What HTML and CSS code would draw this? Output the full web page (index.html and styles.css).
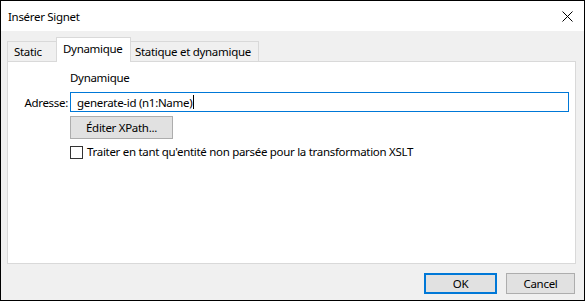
FILE: index.html
```html
<!DOCTYPE html>
<html lang="fr">
<head>
  <meta charset="UTF-8">
  <title>Insérer Signet</title>
  <link rel="stylesheet" href="styles.css">
</head>
<body>
  <div class="dialogue">
    <!-- Barre de titre -->
    <div class="titre">
      <span>Insérer Signet</span>
      <svg class="fermer" width="11" height="11" viewBox="0 0 11 11">
        <path d="M0.5 0.5 L10.5 10.5 M10.5 0.5 L0.5 10.5" stroke="#000" stroke-width="1" fill="none"/>
      </svg>
    </div>

    <div class="corps">
      <!-- Onglets -->
      <div class="onglets">
        <div class="onglet o-static">Static</div>
        <div class="onglet actif">Dynamique</div>
        <div class="onglet o-mixte">Statique et dynamique</div>
      </div>

      <div class="panneau">
        <div class="rangee">
          <span class="etiquette"></span>
          <span class="groupe">Dynamique</span>
        </div>
        <div class="rangee champ-rangee">
          <span class="etiquette">Adresse:</span>
          <div class="champ">generate-id (n1:Name)<span class="curseur"></span></div>
        </div>
        <div class="rangee">
          <span class="etiquette"></span>
          <button class="bouton xpath">Éditer XPath...</button>
        </div>
        <div class="rangee case-rangee">
          <span class="etiquette"></span>
          <span class="case"></span>
          <span class="case-texte">Traiter en tant qu'entité non parsée pour la transformation XSLT</span>
        </div>
      </div>

      <div class="pied">
        <button class="bouton defaut">OK</button>
        <button class="bouton">Cancel</button>
      </div>
    </div>
  </div>
</body>
</html>
```

FILE: styles.css
```css
body {
  margin: 0;
  font-family: 'Noto Sans', sans-serif;
  font-size: 11.5px;
  letter-spacing: -0.3px;
  color: #000;
}

.dialogue {
  width: 585px;
  height: 301px;
  box-sizing: border-box;
  border: 1px solid #000;
  display: flex;
  flex-direction: column;
  background: #f0f0f0;
}

.titre {
  height: 30px;
  background: #fff;
  display: flex;
  align-items: center;
  justify-content: space-between;
  padding: 0 11px 0 7px;
}

.fermer {
  margin-top: 1px;
}

.corps {
  flex: 1;
  display: flex;
  flex-direction: column;
  padding: 6px 8px 0 6px;
}

.onglets {
  display: flex;
  align-items: flex-end;
  height: 24px;
}

.onglet {
  height: 20px;
  box-sizing: border-box;
  border: 1px solid #d9d9d9;
  border-bottom: none;
  background: #f0f0f0;
  line-height: 20px;
  white-space: nowrap;
}

.o-static {
  width: 49px;
  padding-left: 6px;
  border-right: none;
}

.onglet.actif {
  width: 75px;
  height: 25px;
  margin-bottom: -1px;
  background: #fff;
  position: relative;
  z-index: 1;
  padding-left: 6px;
  line-height: 22px;
}

.o-mixte {
  width: 128px;
  padding-left: 4px;
  border-left: none;
}

.panneau {
  height: 203px;
  box-sizing: border-box;
  background: #fff;
  border: 1px solid #d9d9d9;
  padding: 8px 6px 0 0;
  display: flex;
  flex-direction: column;
}

.rangee {
  display: flex;
  align-items: center;
}

.etiquette {
  width: 62px;
  flex: none;
  text-align: right;
  padding-right: 2px;
  box-sizing: border-box;
}

.groupe {
  height: 16px;
  line-height: 16px;
}

.champ-rangee {
  margin-top: 6px;
}

.champ {
  flex: 1;
  height: 20px;
  box-sizing: border-box;
  border: 1px solid #0078d7;
  padding-left: 6px;
  display: flex;
  align-items: center;
}

.curseur {
  display: inline-block;
  width: 1px;
  height: 14px;
  background: #000;
  margin-left: 1px;
}

.bouton {
  font-family: 'Noto Sans', sans-serif;
  font-size: 11.5px;
  letter-spacing: -0.3px;
  background: #e1e1e1;
  border: 1px solid #adadad;
  height: 23px;
  padding: 0;
  color: #000;
}

.xpath {
  width: 103px;
  margin-top: 4px;
}

.case-rangee {
  margin-top: 6px;
}

.case {
  width: 13px;
  height: 13px;
  box-sizing: border-box;
  border: 1px solid #333;
  background: #fff;
  flex: none;
}

.case-texte {
  margin-left: 4px;
  line-height: 14px;
}

.pied {
  display: flex;
  justify-content: flex-end;
  gap: 9px;
  padding-top: 9px;
  padding-right: 1px;
}

.pied .bouton {
  height: 21px;
  width: 69px;
}

.pied .defaut {
  width: 73px;
  border: 2px solid #0078d7;
}
```
